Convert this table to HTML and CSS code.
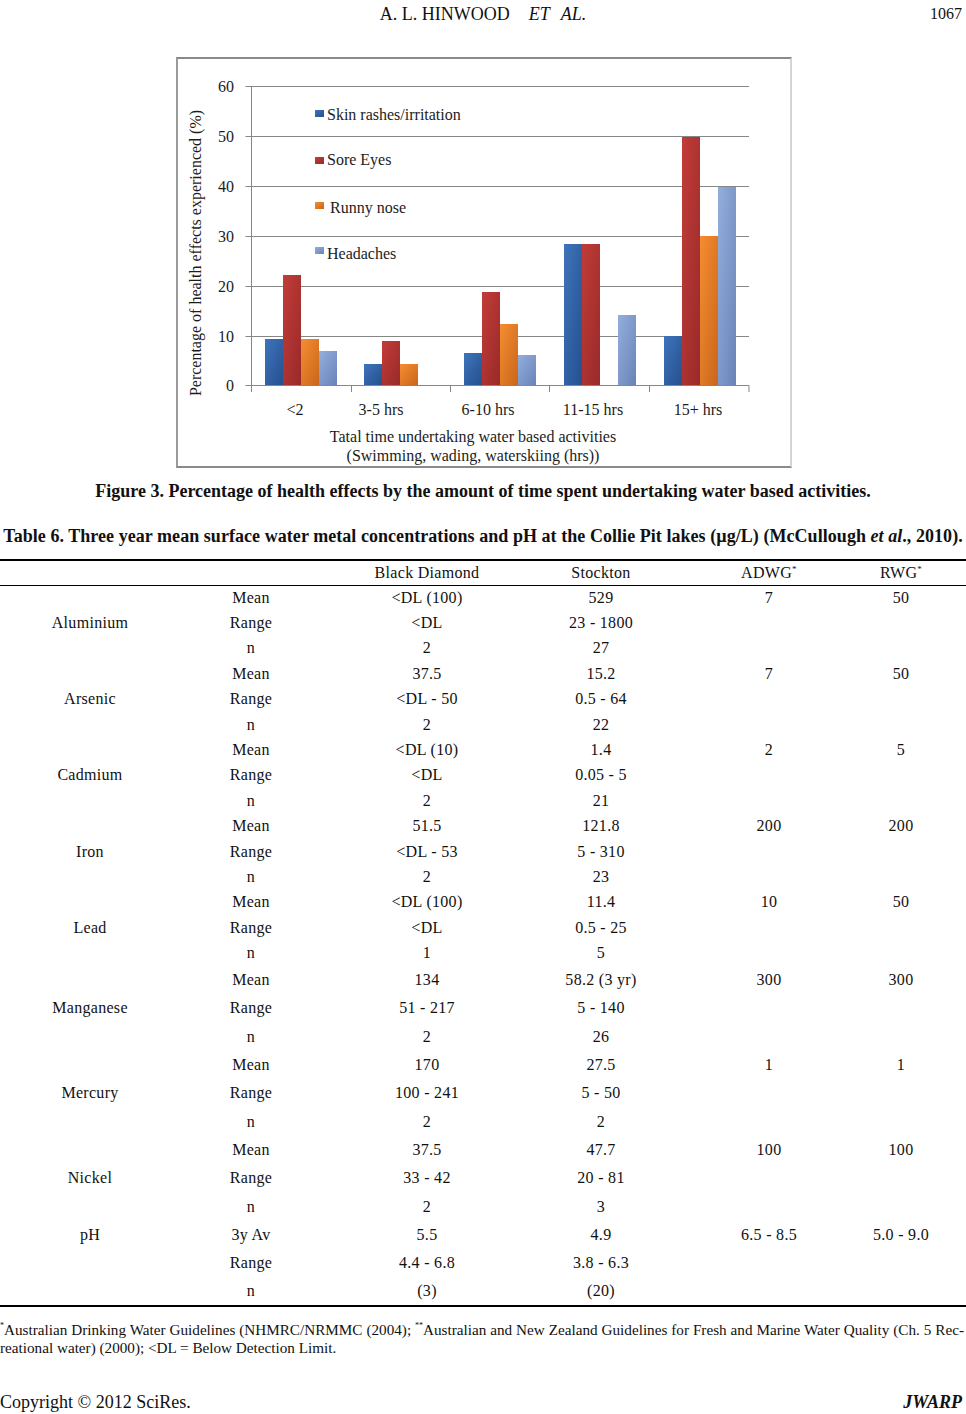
FILE: index.html
```html
<!DOCTYPE html>
<html>
<head>
<meta charset="utf-8">
<link rel="stylesheet" href="styles.css">
</head>
<body>
<div class="page">
  <header class="running-head">
    <div class="authors"><span>A. L. HINWOOD</span><i class="et">ET</i><i>AL.</i></div>
    <div class="page-no">1067</div>
  </header>

  <div class="figure-wrap">
    <div class="figure">
      <svg class="chart" width="612" height="407" viewBox="0 0 612 407">
        <defs>
          <linearGradient id="gBlue" x1="0" y1="0" x2="1" y2="1">
            <stop offset="0" stop-color="#3f74bb"/>
            <stop offset="1" stop-color="#24508f"/>
          </linearGradient>
          <linearGradient id="gRed" x1="0" y1="0" x2="1" y2="1">
            <stop offset="0" stop-color="#c23c38"/>
            <stop offset="1" stop-color="#982a29"/>
          </linearGradient>
          <linearGradient id="gOrange" x1="0" y1="0" x2="1" y2="1">
            <stop offset="0" stop-color="#f58d30"/>
            <stop offset="1" stop-color="#c9661c"/>
          </linearGradient>
          <linearGradient id="gLight" x1="0" y1="0" x2="1" y2="1">
            <stop offset="0" stop-color="#93afdc"/>
            <stop offset="1" stop-color="#6983b8"/>
          </linearGradient>
        </defs>
        <g class="grid">
          <line x1="67.5" y1="27.5" x2="571" y2="27.5"/>
          <line x1="67.5" y1="77.5" x2="571" y2="77.5"/>
          <line x1="67.5" y1="127.5" x2="571" y2="127.5"/>
          <line x1="67.5" y1="177.5" x2="571" y2="177.5"/>
          <line x1="67.5" y1="227.5" x2="571" y2="227.5"/>
          <line x1="67.5" y1="277.5" x2="571" y2="277.5"/>
          <line x1="67.5" y1="326.5" x2="571" y2="326.5"/>
          <line x1="73.5" y1="27.5" x2="73.5" y2="333"/>
          <line x1="173.5" y1="326.5" x2="173.5" y2="333"/>
          <line x1="272.5" y1="326.5" x2="272.5" y2="333"/>
          <line x1="371.5" y1="326.5" x2="371.5" y2="333"/>
          <line x1="471.5" y1="326.5" x2="471.5" y2="333"/>
          <line x1="571" y1="326.5" x2="571" y2="333"/>
        </g>
        <g class="ticks">
          <text x="56" y="33">60</text>
          <text x="56" y="83">50</text>
          <text x="56" y="133">40</text>
          <text x="56" y="183">30</text>
          <text x="56" y="233">20</text>
          <text x="56" y="283">10</text>
          <text x="56" y="332">0</text>
        </g>
        <g class="bars">
          <rect x="87" y="280" width="18" height="46" fill="url(#gBlue)"/>
          <rect x="105" y="216" width="18" height="110" fill="url(#gRed)"/>
          <rect x="123" y="280" width="18" height="46" fill="url(#gOrange)"/>
          <rect x="141" y="292" width="18" height="34" fill="url(#gLight)"/>

          <rect x="186" y="305" width="18" height="21" fill="url(#gBlue)"/>
          <rect x="204" y="282" width="18" height="44" fill="url(#gRed)"/>
          <rect x="222" y="305" width="18" height="21" fill="url(#gOrange)"/>

          <rect x="286" y="294" width="18" height="32" fill="url(#gBlue)"/>
          <rect x="304" y="233" width="18" height="93" fill="url(#gRed)"/>
          <rect x="322" y="265" width="18" height="61" fill="url(#gOrange)"/>
          <rect x="340" y="296" width="18" height="30" fill="url(#gLight)"/>

          <rect x="386" y="185" width="18" height="141" fill="url(#gBlue)"/>
          <rect x="404" y="185" width="18" height="141" fill="url(#gRed)"/>
          <rect x="440" y="256" width="18" height="70" fill="url(#gLight)"/>

          <rect x="486" y="277" width="18" height="49" fill="url(#gBlue)"/>
          <rect x="504" y="78" width="18" height="248" fill="url(#gRed)"/>
          <rect x="522" y="177" width="18" height="149" fill="url(#gOrange)"/>
          <rect x="540" y="128" width="18" height="198" fill="url(#gLight)"/>
        </g>
        <g class="legend">
          <rect x="137" y="51" width="9" height="7" fill="url(#gBlue)"/>
          <text x="149" y="60.5">Skin rashes/irritation</text>
          <rect x="137" y="98" width="9" height="7" fill="url(#gRed)"/>
          <text x="149" y="105.5">Sore Eyes</text>
          <rect x="137" y="143" width="9" height="7" fill="url(#gOrange)"/>
          <text x="152" y="153.5">Runny nose</text>
          <rect x="137" y="188" width="9" height="7" fill="url(#gLight)"/>
          <text x="149" y="199.5">Headaches</text>
        </g>
        <g class="xlabels">
          <text x="117" y="356">&lt;2</text>
          <text x="203" y="356">3-5 hrs</text>
          <text x="310" y="356">6-10 hrs</text>
          <text x="415" y="356">11-15 hrs</text>
          <text x="520" y="356">15+ hrs</text>
          <text x="295" y="383">Tatal time undertaking water based activities</text>
          <text x="295" y="402">(Swimming, wading, waterskiing (hrs))</text>
        </g>
        <text class="ylabel" transform="translate(23,194) rotate(-90)">Percentage of health effects experienced (%)</text>
      </svg>
    </div>
  </div>

  <p class="fig-caption">Figure 3. Percentage of health effects by the amount of time spent undertaking water based activities.</p>
  <p class="tab-caption">Table 6. Three year mean surface water metal concentrations and pH at the Collie Pit lakes (µg/L) (McCullough <i>et al</i>., 2010).</p>

  <table class="data">
    <colgroup>
      <col class="c1"><col class="c2"><col class="c3"><col class="c4"><col class="c5"><col class="c6"><col class="c7">
    </colgroup>
    <thead>
      <tr class="head"><th></th><th></th><th>Black Diamond</th><th>Stockton</th><th>ADWG<sup>*</sup></th><th>RWG<sup>*</sup></th><th></th></tr>
    </thead>
    <tbody>
      <tr class="ra"><td rowspan="3">Aluminium</td><td>Mean</td><td>&lt;DL (100)</td><td>529</td><td>7</td><td>50</td><td></td></tr>
      <tr class="ra"><td>Range</td><td>&lt;DL</td><td>23 - 1800</td><td></td><td></td><td></td></tr>
      <tr class="ra"><td>n</td><td>2</td><td>27</td><td></td><td></td><td></td></tr>

      <tr class="ra"><td rowspan="3">Arsenic</td><td>Mean</td><td>37.5</td><td>15.2</td><td>7</td><td>50</td><td></td></tr>
      <tr class="ra"><td>Range</td><td>&lt;DL - 50</td><td>0.5 - 64</td><td></td><td></td><td></td></tr>
      <tr class="ra"><td>n</td><td>2</td><td>22</td><td></td><td></td><td></td></tr>

      <tr class="ra"><td rowspan="3">Cadmium</td><td>Mean</td><td>&lt;DL (10)</td><td>1.4</td><td>2</td><td>5</td><td></td></tr>
      <tr class="ra"><td>Range</td><td>&lt;DL</td><td>0.05 - 5</td><td></td><td></td><td></td></tr>
      <tr class="ra"><td>n</td><td>2</td><td>21</td><td></td><td></td><td></td></tr>

      <tr class="ra"><td rowspan="3">Iron</td><td>Mean</td><td>51.5</td><td>121.8</td><td>200</td><td>200</td><td></td></tr>
      <tr class="ra"><td>Range</td><td>&lt;DL - 53</td><td>5 - 310</td><td></td><td></td><td></td></tr>
      <tr class="ra"><td>n</td><td>2</td><td>23</td><td></td><td></td><td></td></tr>

      <tr class="ra"><td rowspan="3">Lead</td><td>Mean</td><td>&lt;DL (100)</td><td>11.4</td><td>10</td><td>50</td><td></td></tr>
      <tr class="ra"><td>Range</td><td>&lt;DL</td><td>0.5 - 25</td><td></td><td></td><td></td></tr>
      <tr class="ra"><td>n</td><td>1</td><td>5</td><td></td><td></td><td></td></tr>

      <tr class="rb"><td rowspan="3">Manganese</td><td>Mean</td><td>134</td><td>58.2 (3 yr)</td><td>300</td><td>300</td><td></td></tr>
      <tr class="rb"><td>Range</td><td>51 - 217</td><td>5 - 140</td><td></td><td></td><td></td></tr>
      <tr class="rb"><td>n</td><td>2</td><td>26</td><td></td><td></td><td></td></tr>

      <tr class="rb"><td rowspan="3">Mercury</td><td>Mean</td><td>170</td><td>27.5</td><td>1</td><td>1</td><td></td></tr>
      <tr class="rb"><td>Range</td><td>100 - 241</td><td>5 - 50</td><td></td><td></td><td></td></tr>
      <tr class="rb"><td>n</td><td>2</td><td>2</td><td></td><td></td><td></td></tr>

      <tr class="rb"><td rowspan="3">Nickel</td><td>Mean</td><td>37.5</td><td>47.7</td><td>100</td><td>100</td><td></td></tr>
      <tr class="rb"><td>Range</td><td>33 - 42</td><td>20 - 81</td><td></td><td></td><td></td></tr>
      <tr class="rb"><td>n</td><td>2</td><td>3</td><td></td><td></td><td></td></tr>

      <tr class="rb"><td>pH</td><td>3y Av</td><td>5.5</td><td>4.9</td><td>6.5 - 8.5</td><td>5.0 - 9.0</td><td></td></tr>
      <tr class="rb"><td></td><td>Range</td><td>4.4 - 6.8</td><td>3.8 - 6.3</td><td></td><td></td><td></td></tr>
      <tr class="rb"><td></td><td>n</td><td>(3)</td><td>(20)</td><td></td><td></td><td></td></tr>
    </tbody>
  </table>

  <div class="footnote">
    <p class="fn-line1"><sup>*</sup>Australian Drinking Water Guidelines (NHMRC/NRMMC (2004); <sup>**</sup>Australian and New Zealand Guidelines for Fresh and Marine Water Quality (Ch. 5 Rec-</p>
    <p class="fn-line2">reational water) (2000); &lt;DL = Below Detection Limit.</p>
  </div>

  <footer class="page-foot">
    <span>Copyright © 2012 SciRes.</span>
    <b><i>JWARP</i></b>
  </footer>
</div>
</body>
</html>
```

FILE: styles.css
```css
html, body {
  margin: 0;
  padding: 0;
  background: #fff;
}

body {
  font-family: "Liberation Serif", "Times New Roman", serif;
  color: #111;
}

.page {
  width: 966px;
  height: 1414px;
  position: relative;
  overflow: hidden;
}

.running-head {
  height: 28px;
  display: flex;
  align-items: center;
  justify-content: center;
  font-size: 18px;
  position: relative;
}

.authors span {
  margin-right: 19px;
}

.authors .et {
  margin-right: 11px;
}

.page-no {
  position: absolute;
  right: 4px;
  top: 5px;
  font-size: 16px;
}

.figure-wrap {
  margin-top: 29px;
  display: flex;
  justify-content: center;
  padding-left: 2px;
}

.figure {
  width: 612px;
  height: 407px;
  border: 2px solid #8a8a8a;
  border-right-color: #d4d4d4;
  border-left-color: #9a9a9a;
}

.chart {
  display: block;
  font-family: "Liberation Serif", "Times New Roman", serif;
  font-size: 16px;
}

.chart .grid line {
  stroke: #868686;
  stroke-width: 1;
}

.chart text {
  fill: #1c1c1c;
}

.chart .ticks text {
  text-anchor: end;
}

.chart .xlabels text {
  text-anchor: middle;
}

.chart .ylabel {
  text-anchor: middle;
}

.fig-caption,
.tab-caption {
  margin: 0;
  font-weight: bold;
  text-align: center;
  line-height: 18px;
  white-space: nowrap;
}

.fig-caption {
  margin-top: 14px;
  font-size: 18px;
}

.tab-caption {
  margin-top: 27px;
  font-size: 18px;
  letter-spacing: 0.05px;
}

.data {
  margin-top: 14px;
  width: 966px;
  table-layout: fixed;
  border-collapse: collapse;
  border-top: 2px solid #000;
  border-bottom: 2px solid #000;
  font-size: 16px;
  letter-spacing: 0.3px;
}

.data col.c1 { width: 180px; }
.data col.c2 { width: 142px; }
.data col.c3 { width: 210px; }
.data col.c4 { width: 138px; }
.data col.c5 { width: 198px; }
.data col.c6 { width: 66px; }
.data col.c7 { width: 32px; }

.data th,
.data td {
  padding: 0;
  text-align: center;
  vertical-align: middle;
  white-space: nowrap;
  font-weight: normal;
}

.data .head {
  height: 25px;
  border-bottom: 1px solid #000;
}

.data sup {
  font-size: 9px;
  vertical-align: 6px;
  line-height: 0;
}

.data .ra { height: 25.4px; }
.data .rb { height: 28.35px; }

.footnote {
  margin-top: 14px;
  font-size: 15.2px;
  line-height: 18px;
}

.footnote p {
  margin: 0;
  white-space: nowrap;
}

.footnote .fn-line1 {
  text-align: justify;
  text-align-last: justify;
  width: 964px;
}

.footnote sup {
  font-size: 8px;
  vertical-align: 7px;
  line-height: 0;
}

.page-foot {
  margin-top: 36px;
  display: flex;
  justify-content: space-between;
  font-size: 18px;
  line-height: 18px;
  padding-right: 4px;
}
```
